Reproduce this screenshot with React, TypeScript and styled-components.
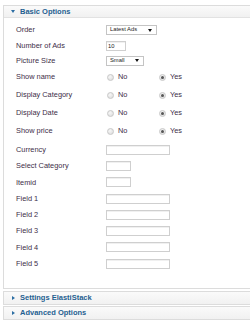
import styled, { createGlobalStyle } from "styled-components"

const GlobalStyle = createGlobalStyle`
  body {
    margin: 0;
    background: #fff;
    font-family: "Liberation Sans", Arial, sans-serif;
    overflow: hidden;
  }
`

type Field =
  | { kind: "select"; label: string; value: string; width: number; h: number }
  | { kind: "input"; label: string; value?: string; width: number; h: number }
  | { kind: "radio"; label: string; h: number }

const topFields: Field[] = [
  { kind: "select", label: "Order", value: "Latest Ads", width: 51, h: 16 },
  { kind: "input", label: "Number of Ads", value: "10", width: 20, h: 15 },
  { kind: "select", label: "Picture Size", value: "Small", width: 38, h: 15 },
  { kind: "radio", label: "Show name", h: 18 },
  { kind: "radio", label: "Display Category", h: 18 },
  { kind: "radio", label: "Display Date", h: 18 },
  { kind: "radio", label: "Show price", h: 18 },
]

const textFields: Field[] = [
  { kind: "input", label: "Currency", width: 64, h: 16.3 },
  { kind: "input", label: "Select Category", width: 25, h: 16.3 },
  { kind: "input", label: "Itemid", width: 25, h: 16.3 },
  { kind: "input", label: "Field 1", width: 64, h: 16.3 },
  { kind: "input", label: "Field 2", width: 64, h: 16.3 },
  { kind: "input", label: "Field 3", width: 64, h: 16.3 },
  { kind: "input", label: "Field 4", width: 64, h: 16.3 },
  { kind: "input", label: "Field 5", width: 64, h: 16.3 },
]

const FieldRow = ({ field }: { field: Field }) => {
  return (
    <Row $h={field.h}>
      <Label>{field.label}</Label>
      {field.kind === "select" && (
        <SelectBox $w={field.width}>
          <SelectText>{field.value}</SelectText>
          <SelectArrow />
        </SelectBox>
      )}
      {field.kind === "input" && (
        <TextInput $w={field.width}>{field.value}</TextInput>
      )}
      {field.kind === "radio" && (
        <RadioGroup>
          <RadioOption>
            <RadioDot />
            <RadioText>No</RadioText>
          </RadioOption>
          <RadioOption>
            <RadioDot $checked />
            <RadioText>Yes</RadioText>
          </RadioOption>
        </RadioGroup>
      )}
    </Row>
  )
}

export default function App() {
  return (
    <Page>
      <GlobalStyle />
      <Panel>
        <PanelHeader>
          <Arrow $open />
          <HeaderTitle>Basic Options</HeaderTitle>
        </PanelHeader>
        <PanelBody>
          {topFields.map((f) => (
            <FieldRow key={f.label} field={f} />
          ))}
          <FieldGroup>
            {textFields.map((f) => (
              <FieldRow key={f.label} field={f} />
            ))}
          </FieldGroup>
        </PanelBody>
      </Panel>
      <Panel $gap={2}>
        <PanelHeader $closed>
          <Arrow />
          <HeaderTitle>Settings ElastiStack</HeaderTitle>
        </PanelHeader>
      </Panel>
      <Panel $gap={1}>
        <PanelHeader $closed>
          <Arrow />
          <HeaderTitle>Advanced Options</HeaderTitle>
        </PanelHeader>
      </Panel>
    </Page>
  )
}

const Page = styled.div`
  padding: 5px 0 0 3px;
  width: 247px;
`

const Panel = styled.div<{ $gap?: number }>`
  margin-top: ${(p) => p.$gap ?? 0}px;
  border: 1px solid #dcdcdc;
  border-right: none;
  background: #fff;
`

const PanelHeader = styled.div<{ $closed?: boolean }>`
  display: flex;
  align-items: center;
  height: ${(p) => (p.$closed ? 12 : 11)}px;
  padding-left: 7px;
  background: linear-gradient(#fafafa, #f1f1f1);
  border-bottom: ${(p) => (p.$closed ? "none" : "1px solid #e2e2e2")};
`

const Arrow = styled.span<{ $open?: boolean }>`
  width: 0;
  height: 0;
  margin-right: 5px;
  ${(p) =>
    p.$open
      ? `
    border-left: 2px solid transparent;
    border-right: 2px solid transparent;
    border-top: 3px solid #2b6da3;
  `
      : `
    border-top: 2px solid transparent;
    border-bottom: 2px solid transparent;
    border-left: 3px solid #2b6da3;
    margin-left: 1px;
    margin-right: 5px;
  `}
`

const HeaderTitle = styled.span`
  font-size: 7.5px;
  font-weight: bold;
  color: #1f5f91;
  line-height: 1;
`

const PanelBody = styled.div`
  padding: 4px 0 16px 12px;
`

const FieldGroup = styled.div`
  margin-top: 1.5px;
`

const Row = styled.div<{ $h: number }>`
  display: flex;
  align-items: center;
  height: ${(p) => p.$h}px;
`

const Label = styled.span`
  width: 90px;
  flex-shrink: 0;
  font-size: 7.4px;
  color: #3d2e47;
  line-height: 1;
`

const TextInput = styled.div<{ $w: number }>`
  box-sizing: border-box;
  width: ${(p) => p.$w}px;
  height: 10px;
  border: 1px solid #cfcfcf;
  box-shadow: inset 0 1px 0 #f0f0f0;
  background: #fff;
  font-size: 5.8px;
  color: #222;
  line-height: 8px;
  padding-left: 1px;
`

const SelectBox = styled.div<{ $w: number }>`
  box-sizing: border-box;
  display: flex;
  align-items: center;
  justify-content: space-between;
  width: ${(p) => p.$w}px;
  height: 10px;
  border: 1px solid #c4c4c4;
  background: #fff;
  padding: 0 4px 0 3px;
`

const SelectText = styled.span`
  font-size: 5.8px;
  color: #222;
  line-height: 1;
`

const SelectArrow = styled.span`
  width: 0;
  height: 0;
  border-left: 2px solid transparent;
  border-right: 2px solid transparent;
  border-top: 3px solid #111;
`

const RadioGroup = styled.div`
  display: flex;
  padding-left: 1px;
`

const RadioOption = styled.div`
  display: flex;
  align-items: center;
  width: 52px;
`

const RadioDot = styled.span<{ $checked?: boolean }>`
  box-sizing: border-box;
  display: flex;
  align-items: center;
  justify-content: center;
  width: 7px;
  height: 7px;
  border-radius: 50%;
  border: 1px solid #c8c8c8;
  background: radial-gradient(circle at 40% 35%, #f7f7f7, #d9d9d9);
  margin-right: 4px;

  &::after {
    content: "";
    display: ${(p) => (p.$checked ? "block" : "none")};
    width: 3px;
    height: 3px;
    border-radius: 50%;
    background: #555;
  }
`

const RadioText = styled.span`
  font-size: 7.4px;
  color: #3d2e47;
  line-height: 1;
`
